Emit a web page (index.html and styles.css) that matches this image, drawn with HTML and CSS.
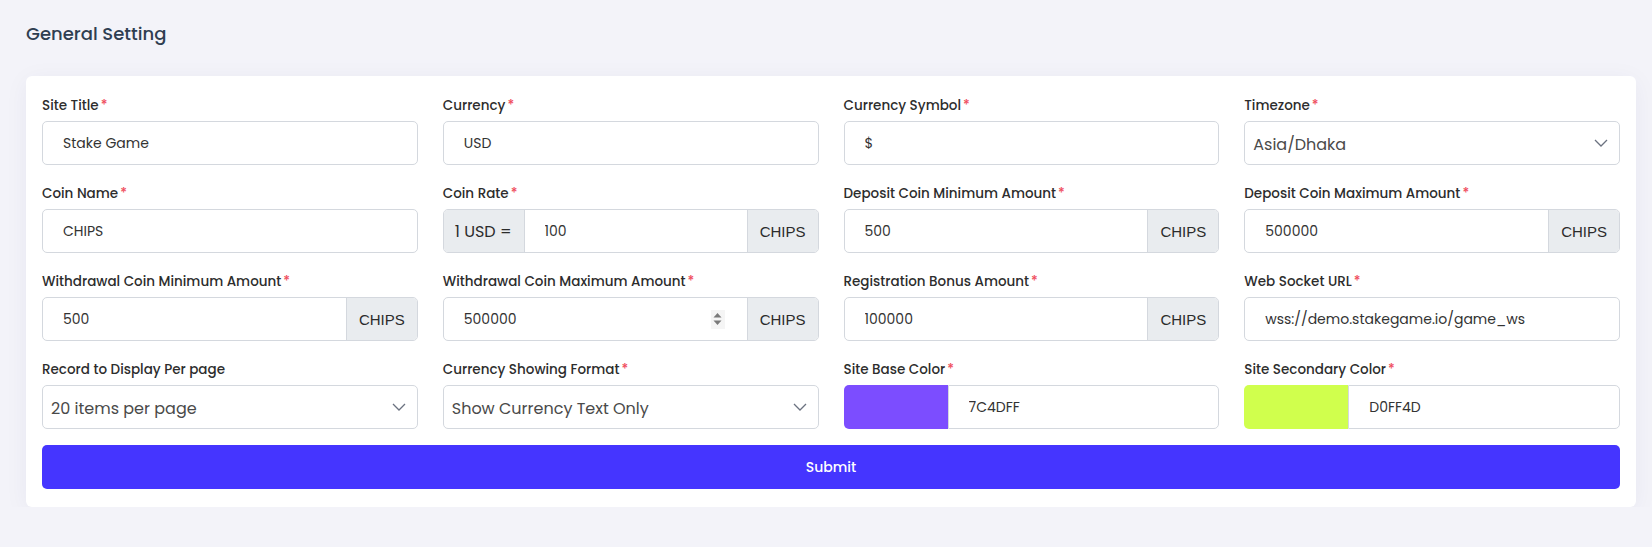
FILE: index.html
```html
<!DOCTYPE html>
<html lang="en">
<head>
<meta charset="utf-8">
<title>General Setting</title>
<link rel="stylesheet" href="styles.css">
</head>
<body>
<div class="page">
  <h1 class="page-title">General Setting</h1>
  <form class="card">
    <div class="grid">
      <div class="field">
        <label class="label">Site Title<span class="req">*</span></label>
        <input class="control" type="text" value="Stake Game">
      </div>
      <div class="field">
        <label class="label">Currency<span class="req">*</span></label>
        <input class="control" type="text" value="USD">
      </div>
      <div class="field">
        <label class="label">Currency Symbol<span class="req">*</span></label>
        <input class="control" type="text" value="$">
      </div>
      <div class="field">
        <label class="label">Timezone<span class="req">*</span></label>
        <div class="select">
          <span class="select-text">Asia/Dhaka</span>
          <svg class="chev" width="14" height="8" viewBox="0 0 14 8"><polyline points="1,1 7,7 13,1" fill="none" stroke="#6b7280" stroke-width="1.3"/></svg>
        </div>
      </div>

      <div class="field">
        <label class="label">Coin Name<span class="req">*</span></label>
        <input class="control" type="text" value="CHIPS">
      </div>
      <div class="field">
        <label class="label">Coin Rate<span class="req">*</span></label>
        <div class="group">
          <span class="addon addon-pre">1 USD =</span>
          <input class="group-input" type="text" value="100">
          <span class="addon addon-post">CHIPS</span>
        </div>
      </div>
      <div class="field">
        <label class="label">Deposit Coin Minimum Amount<span class="req">*</span></label>
        <div class="group">
          <input class="group-input" type="text" value="500">
          <span class="addon addon-post">CHIPS</span>
        </div>
      </div>
      <div class="field">
        <label class="label">Deposit Coin Maximum Amount<span class="req">*</span></label>
        <div class="group">
          <input class="group-input" type="text" value="500000">
          <span class="addon addon-post">CHIPS</span>
        </div>
      </div>

      <div class="field">
        <label class="label">Withdrawal Coin Minimum Amount<span class="req">*</span></label>
        <div class="group">
          <input class="group-input" type="text" value="500">
          <span class="addon addon-post">CHIPS</span>
        </div>
      </div>
      <div class="field">
        <label class="label">Withdrawal Coin Maximum Amount<span class="req">*</span></label>
        <div class="group">
          <input class="group-input" type="text" value="500000">
          <span class="spin">
            <svg width="9" height="14" viewBox="0 0 9 14"><polygon points="4.5,1 8.5,5.5 0.5,5.5" fill="#7a7a7a"/><polygon points="0.5,8.5 8.5,8.5 4.5,13" fill="#7a7a7a"/></svg>
          </span>
          <span class="addon addon-post">CHIPS</span>
        </div>
      </div>
      <div class="field">
        <label class="label">Registration Bonus Amount<span class="req">*</span></label>
        <div class="group">
          <input class="group-input" type="text" value="100000">
          <span class="addon addon-post">CHIPS</span>
        </div>
      </div>
      <div class="field">
        <label class="label">Web Socket URL<span class="req">*</span></label>
        <input class="control" type="text" value="wss://demo.stakegame.io/game_ws">
      </div>

      <div class="field">
        <label class="label">Record to Display Per page</label>
        <div class="select">
          <span class="select-text">20 items per page</span>
          <svg class="chev" width="14" height="8" viewBox="0 0 14 8"><polyline points="1,1 7,7 13,1" fill="none" stroke="#6b7280" stroke-width="1.3"/></svg>
        </div>
      </div>
      <div class="field">
        <label class="label">Currency Showing Format<span class="req">*</span></label>
        <div class="select">
          <span class="select-text">Show Currency Text Only</span>
          <svg class="chev" width="14" height="8" viewBox="0 0 14 8"><polyline points="1,1 7,7 13,1" fill="none" stroke="#6b7280" stroke-width="1.3"/></svg>
        </div>
      </div>
      <div class="field">
        <label class="label">Site Base Color<span class="req">*</span></label>
        <div class="color-group">
          <span class="swatch swatch-base"></span>
          <input class="color-text" type="text" value="7C4DFF">
        </div>
      </div>
      <div class="field">
        <label class="label">Site Secondary Color<span class="req">*</span></label>
        <div class="color-group">
          <span class="swatch swatch-secondary"></span>
          <input class="color-text" type="text" value="D0FF4D">
        </div>
      </div>
    </div>
    <button class="submit" type="button">Submit</button>
  </form>
</div>
</body>
</html>
```

FILE: styles.css
```css
* { box-sizing: border-box; }

html, body {
  margin: 0;
  padding: 0;
  background: #f3f3f9;
}

body {
  font-family: "Poppins", "Inter", "Open Sans", sans-serif;
  color: #2b2b2b;
}

.page {
  padding: 22px 16px 0 26px;
}

.page-title {
  margin: 0 0 30px 0;
  font-size: 18px;
  line-height: 24px;
  font-weight: 500;
  color: #2f3e51;
}

.card {
  background: #ffffff;
  border-radius: 6px;
  padding: 20px 16px 18px 16px;
  box-shadow: 0 4px 24px rgba(40, 40, 90, 0.05);
}

.grid {
  display: grid;
  grid-template-columns: repeat(4, minmax(0, 1fr));
  column-gap: 25px;
  row-gap: 19px;
}

.field {
  display: flex;
  flex-direction: column;
  min-width: 0;
}

.label {
  font-size: 13.5px;
  line-height: 20px;
  font-weight: 500;
  color: #2d2d2d;
  margin-bottom: 5px;
  white-space: nowrap;
}

.req {
  color: #ef4b5c;
  margin-left: 2px;
}

.control {
  height: 44px;
  width: 100%;
  min-width: 0;
  border: 1px solid #d4d8de;
  border-radius: 5px;
  padding: 0 20px;
  font-family: inherit;
  font-size: 14px;
  color: #333333;
  background: #fff;
  outline: none;
}

.select {
  height: 44px;
  border: 1px solid #d4d8de;
  border-radius: 5px;
  padding: 0 11px 0 8px;
  display: flex;
  align-items: center;
  justify-content: space-between;
  background: #fff;
}

.select-text {
  font-size: 16px;
  color: #4a4a4a;
  padding-top: 3px;
}

.chev { flex: none; }

.group {
  height: 44px;
  display: flex;
  border: 1px solid #d4d8de;
  border-radius: 5px;
  overflow: hidden;
  background: #fff;
}

.group-input {
  flex: 1;
  width: 0;
  min-width: 0;
  border: none;
  padding: 0 20px;
  font-family: inherit;
  font-size: 14px;
  color: #333333;
  outline: none;
  background: transparent;
}

.addon {
  display: flex;
  align-items: center;
  padding: 0 12px;
  background: #e9ecef;
  color: #2b2b2b;
  flex: none;
}

.addon-pre {
  border-right: 1px solid #d4d8de;
  font-size: 16px;
  padding: 0 12px 0 11px;
}

.addon-post {
  border-left: 1px solid #d4d8de;
  font-family: "Liberation Sans", Arial, sans-serif;
  font-size: 15px;
}

.spin {
  flex: none;
  align-self: center;
  width: 14px;
  height: 19px;
  margin-right: 22px;
  background: #f5f5f5;
  display: flex;
  align-items: center;
  justify-content: center;
}

.color-group {
  height: 44px;
  display: flex;
}

.swatch {
  flex: none;
  width: 104px;
  border-radius: 5px 0 0 5px;
}

.swatch-base { background: #7c4dff; }
.swatch-secondary { background: #d0ff4d; }

.color-text {
  flex: 1;
  width: 0;
  min-width: 0;
  height: 44px;
  border: 1px solid #d4d8de;
  border-radius: 0 5px 5px 0;
  padding: 0 20px;
  font-family: inherit;
  font-size: 14px;
  color: #333333;
  outline: none;
  background: #fff;
}

.submit {
  display: block;
  width: 100%;
  height: 44px;
  margin-top: 16px;
  border: none;
  border-radius: 5px;
  background: #4535ff;
  color: #ffffff;
  font-family: inherit;
  font-size: 14px;
  font-weight: 500;
}
```
